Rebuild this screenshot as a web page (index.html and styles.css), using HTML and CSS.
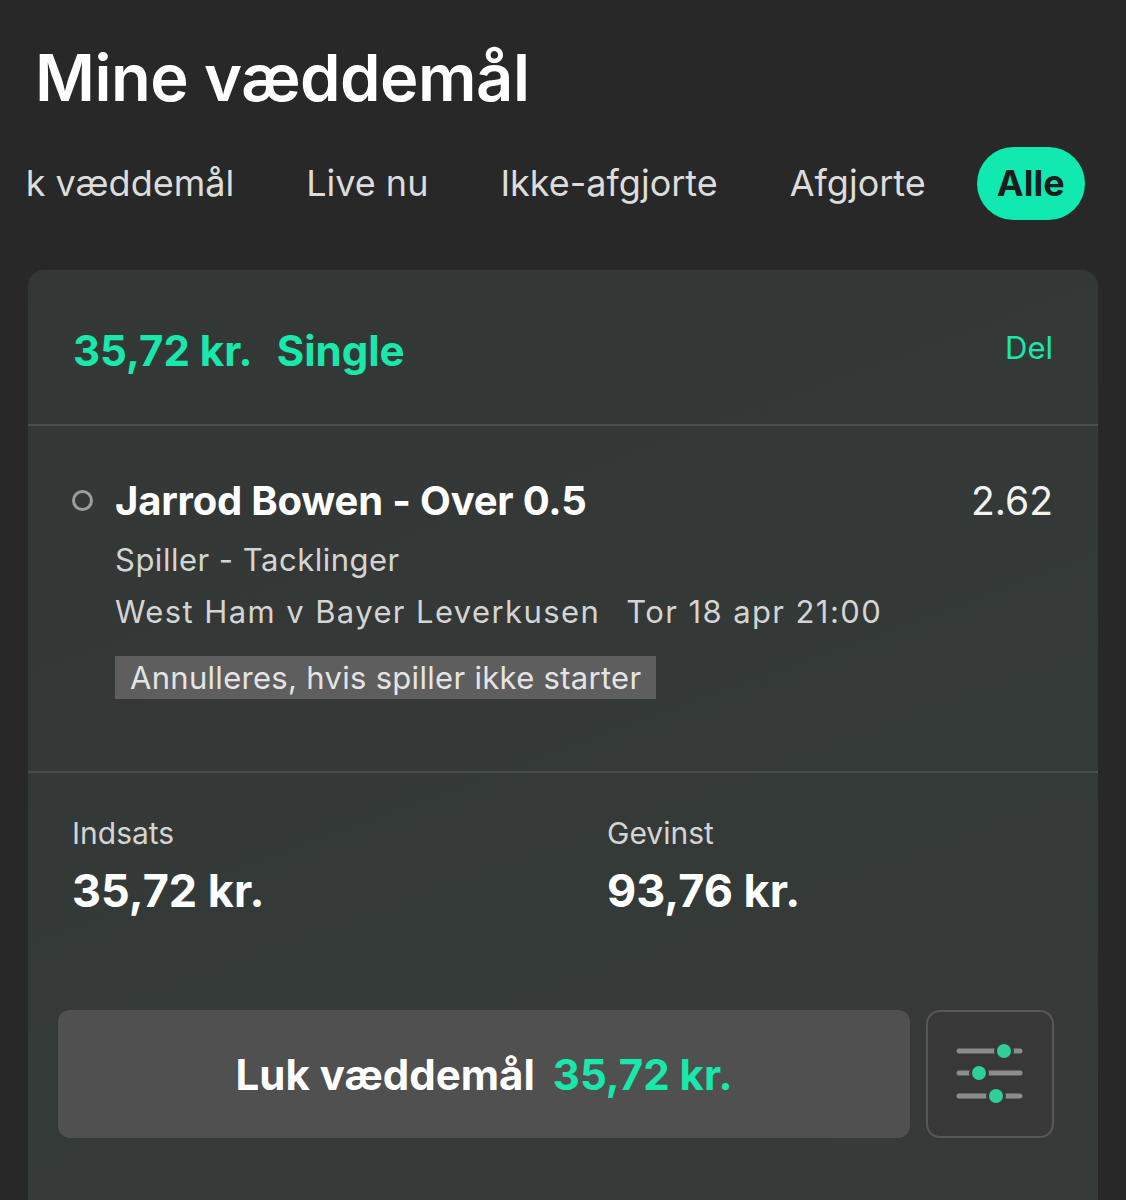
FILE: index.html
```html
<!DOCTYPE html>
<html lang="da">
<head>
    <meta charset="UTF-8">
    <meta name="viewport" content="width=device-width, initial-scale=1.0">
    <title>Mine væddemål</title>
    <link rel="stylesheet" href="styles.css">
</head>
<body>

    <h1 class="page-title">Mine væddemål</h1>

    <nav class="tabs">
        <div class="tabs-track">
            <span class="tab">Luk væddemål</span>
            <span class="tab">Live nu</span>
            <span class="tab">Ikke-afgjorte</span>
            <span class="tab">Afgjorte</span>
            <span class="tab active">Alle</span>
        </div>
    </nav>

    <div class="bet-card">
        <div class="bet-header">
            <div class="bet-type">35,72 kr.<span class="bet-kind">Single</span></div>
            <a class="share" href="#">Del</a>
        </div>

        <div class="selection">
            <div class="selection-top">
                <span class="status-dot"></span>
                <span class="selection-name">Jarrod Bowen - Over 0.5</span>
                <span class="odds">2.62</span>
            </div>
            <div class="selection-market">Spiller - Tacklinger</div>
            <div class="selection-event">West Ham v Bayer Leverkusen <span class="event-time">Tor 18 apr 21:00</span></div>
            <div class="selection-note">Annulleres, hvis spiller ikke starter</div>
        </div>

        <div class="totals">
            <div class="total-col">
                <div class="total-label">Indsats</div>
                <div class="total-value">35,72 kr.</div>
            </div>
            <div class="total-col">
                <div class="total-label">Gevinst</div>
                <div class="total-value">93,76 kr.</div>
            </div>
        </div>

        <div class="actions">
            <button class="cashout">Luk væddemål <span class="cashout-amount">35,72 kr.</span></button>
            <button class="settings" aria-label="Indstillinger">
                <svg width="72" height="70" viewBox="0 0 72 70">
                    <!-- three sliders -->
                    <line x1="5" y1="12" x2="66" y2="12" stroke="#8c8c8c" stroke-width="5" stroke-linecap="round"/>
                    <line x1="5" y1="34" x2="66" y2="34" stroke="#8c8c8c" stroke-width="5" stroke-linecap="round"/>
                    <line x1="5" y1="57" x2="66" y2="57" stroke="#8c8c8c" stroke-width="5" stroke-linecap="round"/>
                    <circle cx="50" cy="12" r="8.5" fill="#2ecf9a" stroke="#383838" stroke-width="3"/>
                    <circle cx="25" cy="34" r="8.5" fill="#2ecf9a" stroke="#383838" stroke-width="3"/>
                    <circle cx="42" cy="57" r="8.5" fill="#2ecf9a" stroke="#383838" stroke-width="3"/>
                </svg>
            </button>
        </div>
    </div>

</body>
</html>
```

FILE: styles.css
```css
body {
    margin: 0;
    background-color: #282828;
    color: #ffffff;
    font-family: Inter, "Noto Sans", sans-serif;
    overflow: hidden;
}
.page-title {
    margin: 0;
    padding: 38px 0 0 35px;
    font-size: 65px;
    font-weight: 600;
    letter-spacing: -0.5px;
    line-height: 80px;
}
.tabs {
    margin-top: 29px;
    margin-left: 27px;
    overflow: hidden;
}
.tabs-track {
    display: flex;
    align-items: center;
    gap: 30px;
    margin-left: -64px;
}
.tab {
    flex-shrink: 0;
    padding: 0 21px;
    height: 73px;
    line-height: 73px;
    font-size: 36px;
    color: #dcdcdc;
    white-space: nowrap;
}
.tab.active {
    background-color: #10eab0;
    color: #1c1c1c;
    font-weight: 700;
    border-radius: 37px;
    padding: 0 20px;
}
.bet-card {
    margin: 50px 28px 0 28px;
    background: linear-gradient(160deg, #333735, #343a38 60%, #363b39);
    border-radius: 16px;
    padding-bottom: 90px;
}
.bet-header {
    display: flex;
    justify-content: space-between;
    align-items: center;
    height: 154px;
    padding: 0 45px;
    border-bottom: 2px solid #4a4f4d;
}
.bet-type {
    margin-top: 6px;
    font-size: 42px;
    font-weight: 700;
    color: #18e8ab;
}
.bet-kind {
    margin-left: 24px;
}
.share {
    font-size: 31px;
    color: #18e8ab;
    text-decoration: none;
}
.selection {
    padding: 50px 45px 72px 44px;
    border-bottom: 2px solid #4a4f4d;
}
.selection-top {
    display: flex;
    align-items: center;
}
.status-dot {
    width: 15px;
    height: 15px;
    border: 3px solid #9c9c9c;
    border-radius: 50%;
    margin-right: 22px;
    margin-left: 0;
}
.selection-name {
    flex: 1;
    font-size: 40px;
    font-weight: 700;
    letter-spacing: -0.2px;
}
.odds {
    font-size: 39px;
    color: #f2f2f2;
}
.selection-market,
.selection-event {
    margin-left: 43px;
    font-size: 31px;
    color: #d4d4d4;
    letter-spacing: 0.5px;
}
.selection-market {
    margin-top: 16px;
}
.selection-event {
    margin-top: 15px;
    letter-spacing: 1.4px;
}
.event-time {
    margin-left: 16px;
}
.selection-note {
    display: inline-block;
    margin: 26px 0 0 43px;
    padding: 0 15px;
    height: 43px;
    line-height: 43px;
    background-color: #5e5e5e;
    font-size: 31px;
    color: #e4e4e4;
    letter-spacing: 0.3px;
}
.totals {
    display: flex;
    padding: 42px 44px 0 44px;
}
.total-col {
    flex-shrink: 0;
    width: 535px;
}
.total-label {
    font-size: 30px;
    color: #d4d4d4;
}
.total-value {
    margin-top: 12px;
    font-size: 45px;
    font-weight: 700;
}
.actions {
    display: flex;
    gap: 16px;
    margin: 92px 44px 0 30px;
}
.cashout {
    flex: 1;
    height: 128px;
    border: none;
    border-radius: 12px;
    background-color: #505050;
    color: #ffffff;
    font-family: inherit;
    font-size: 42px;
    font-weight: 700;
    cursor: pointer;
}
.cashout-amount {
    margin-left: 8px;
    color: #18e8ab;
}
.settings {
    width: 128px;
    height: 128px;
    border: 2px solid #575757;
    border-radius: 14px;
    background-color: #383838;
    display: flex;
    align-items: center;
    justify-content: center;
    padding: 0;
    cursor: pointer;
}
```
